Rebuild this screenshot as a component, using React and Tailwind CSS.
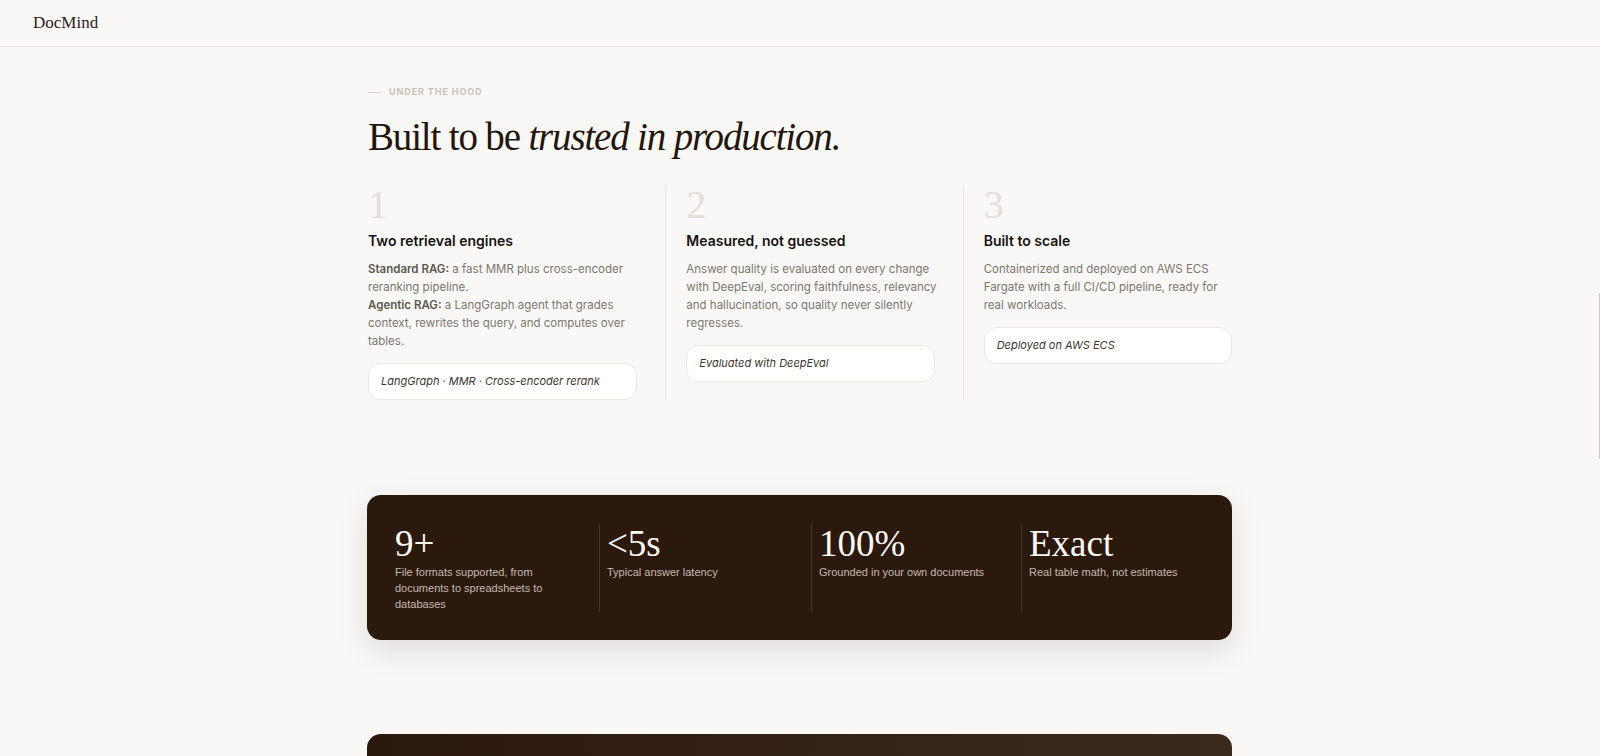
import React from "react";

const serif = "font-['Liberation_Serif',Georgia,serif]";
const sans = "font-['Inter','Liberation_Sans',sans-serif]";

function Feature({ num, title, children, tag, first, wide }) {
  return (
    <div className={first ? "flex flex-col" : "flex flex-col border-l border-[#e8e4df] pl-[20px]"}>
      <div className={`${serif} text-[40px] leading-[40px] text-[#e2ded8]`}>{num}</div>
      <h3 className={`${sans} mt-[6px] text-[14px] leading-[20px] font-semibold text-[#151312]`}>{title}</h3>
      <div className={`${sans} mt-[9px] text-[11.5px] leading-[18px] text-[#7d7770] ${wide ? "-mr-4" : ""}`}>{children}</div>
      <div className={`${sans} mt-[13px] rounded-xl border border-[#ebe7e2] bg-white px-3 py-[10px] text-[11px] leading-[15px] italic text-[#3b3631]`}>
        {tag}
      </div>
    </div>
  );
}

function Stat({ value, label, first }) {
  return (
    <div className={first ? "pr-6" : "border-l border-[#45352a] pl-[7px] pr-3"}>
      <div className={`${serif} text-[37px] leading-[41px] text-[#fbf8f4]`}>{value}</div>
      <div className="font-['Liberation_Sans',Arial,sans-serif] text-[11px] leading-[16px] text-[#c4bab0]">{label}</div>
    </div>
  );
}

export default function App() {
  return (
    <div className="min-h-screen bg-[#f9f8f6] overflow-hidden">
      <header className="h-[47px] border-b border-[#e9e6e1] flex items-center px-[33px]">
        <span className={`${serif} text-[17px] text-[#2e211a]`}>DocMind</span>
      </header>

      <main className="mx-auto w-[864px]">
        <section className="pt-[39px]">
          <div className="flex items-center gap-[7px] h-[12px]">
            <span className="block w-[14px] h-px bg-[#d6d1cb]"></span>
            <span className={`${sans} text-[9px] font-bold tracking-[0.1em] text-[#c8c2bb]`}>UNDER THE HOOD</span>
          </div>
          <h2 className={`${serif} mt-[15px] text-[39px] leading-[47px] tracking-[-0.03em] text-[#24160c]`}>
            Built to be <em className="italic">trusted in production.</em>
          </h2>

          <div className="mt-[25px] grid grid-cols-3 gap-x-[28px]">
            <Feature num="1" title="Two retrieval engines" tag="LangGraph · MMR · Cross-encoder rerank" first>
              <span className="font-semibold text-[#5e5851]">Standard RAG:</span> a fast MMR plus cross-encoder reranking pipeline.
              <br />
              <span className="font-semibold text-[#5e5851]">Agentic RAG:</span> a LangGraph agent that grades context, rewrites the query, and computes over tables.
            </Feature>
            <Feature num="2" title="Measured, not guessed" tag="Evaluated with DeepEval" wide>
              Answer quality is evaluated on every change with DeepEval, scoring faithfulness, relevancy and hallucination, so quality never silently regresses.
            </Feature>
            <Feature num="3" title="Built to scale" tag="Deployed on AWS ECS">
              Containerized and deployed on AWS ECS Fargate with a full CI/CD pipeline, ready for real workloads.
            </Feature>
          </div>
        </section>

        <section className="mt-[95px] -ml-px w-[865px] rounded-[14px] bg-[#2c190d] px-[28px] py-[28px] shadow-[0_10px_30px_rgba(44,25,13,0.12)]">
          <div className="grid grid-cols-[204px_212px_210px_1fr]">
            <Stat value="9+" label="File formats supported, from documents to spreadsheets to databases" first />
            <Stat value="<5s" label="Typical answer latency" />
            <Stat value="100%" label="Grounded in your own documents" />
            <Stat value="Exact" label="Real table math, not estimates" />
          </div>
        </section>

        <section className="mt-[94px] -ml-px w-[865px] h-[220px] rounded-[14px] bg-gradient-to-r from-[#2c190d] to-[#3b2a1b]"></section>
      </main>

      <div className="fixed right-0 top-[293px] w-px h-[166px] bg-[#cfcac4]"></div>
    </div>
  );
}
